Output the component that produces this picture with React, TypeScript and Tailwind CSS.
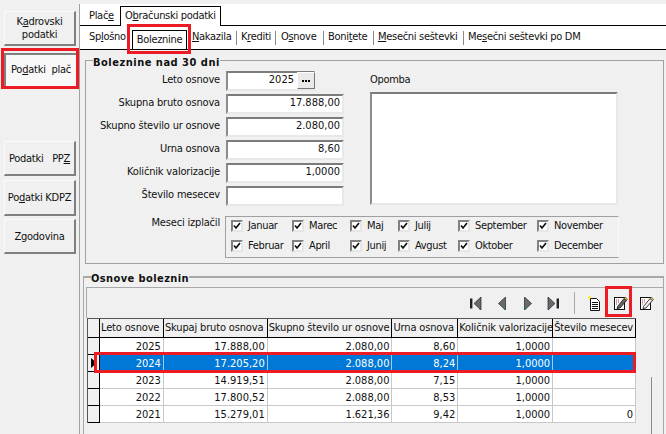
import React from "react";

const U = ({ children }: { children: React.ReactNode }) => <span className="underline underline-offset-1">{children}</span>;

function SideBtn({ children, className = "" }: { children: React.ReactNode; className?: string }) {
  return (
    <div className={`w-[72px] ml-[4px] flex flex-col items-center justify-center leading-[13px] text-center whitespace-nowrap border-t border-l border-t-[#fafafa] border-l-[#fafafa] border-b-2 border-r-2 border-b-[#7f7f7f] border-r-[#7f7f7f] bg-[#f0f0f0] ${className}`}>
      {children}
    </div>
  );
}

function Field({ label, value, extra }: { label: string; value?: string; extra?: React.ReactNode }) {
  return (
    <div className="flex items-center h-[23px]">
      <div className="w-[134px] text-right whitespace-nowrap tracking-[-0.18px]">{label}</div>
      <div className={`ml-[6px] ${extra ? "w-[89px] pr-0" : "w-[118px] pr-[2px]"} h-[20px] flex items-center justify-end bg-white border-2 border-t-[#7c7c7c] border-l-[#8c8c8c] border-b-[#e8e8e8] border-r-[#e8e8e8]`}>
        <span>{value}</span>
        {extra && <div className="ml-[3px] -mr-[2px]">{extra}</div>}
      </div>
    </div>
  );
}

function Check({ label, w }: { label: string; w: string }) {
  return (
    <div className={`flex items-center h-[12px] leading-[12px] ${w}`}>
      <div className="w-[12px] h-[12px] shrink-0 bg-white border-2 border-t-[#808080] border-l-[#808080] border-b-[#e6e6e6] border-r-[#e6e6e6] flex items-center justify-center">
        <svg width="8" height="8" viewBox="0 0 8 8"><path d="M1 3.5 L3 6 L7 1" fill="none" stroke="#111" strokeWidth="1.7" /></svg>
      </div>
      <span className="ml-[5px] whitespace-nowrap tracking-[-0.35px]">{label}</span>
    </div>
  );
}

function Dots() {
  return (
    <div className="w-[18px] h-[17px] bg-[#eaeaea] border border-t-white border-l-white border-b-[#777] border-r-[#777] flex items-center justify-center gap-[1px]">
      <i className="w-[2px] h-[2px] bg-black" /><i className="w-[2px] h-[2px] bg-black" /><i className="w-[2px] h-[2px] bg-black" />
    </div>
  );
}

const cols = ["w-[64px]", "w-[104px]", "w-[125px]", "w-[66px]", "w-[95px]", "w-[83px]"];
const heads = ["Leto osnove", "Skupaj bruto osnova", "Skupno število ur osnove", "Urna osnova", "Količnik valorizacije", "Število mesecev"];
const rows = [
  ["2025", "17.888,00", "2.080,00", "8,60", "1,0000", ""],
  ["2024", "17.205,20", "2.088,00", "8,24", "1,0000", ""],
  ["2023", "14.919,51", "2.088,00", "7,15", "1,0000", ""],
  ["2022", "17.800,52", "2.088,00", "8,53", "1,0000", ""],
  ["2021", "15.279,01", "1.621,36", "9,42", "1,0000", "0"],
];

function Nav() {
  const c = "#6a6a6a";
  return (
    <div className="flex items-center h-[30px] justify-end pr-[9px]">
      <svg width="12" height="13" viewBox="0 0 12 13" className="mr-[16px]"><rect x="0" y="1.5" width="2" height="10" fill="#222" /><rect x="2" y="1.5" width="1" height="10" fill="#999" /><path d="M11 0 L4 6.5 L11 13Z" fill={c} stroke="#222" strokeWidth="0.7" /><path d="M9 11.5 L11 13" stroke="#7a1fa2" /></svg>
      <svg width="8" height="13" viewBox="0 0 8 13" className="mr-[18px]"><path d="M7.5 0 L0.5 6.5 L7.5 13Z" fill={c} stroke="#222" strokeWidth="0.7" /><path d="M5.5 11.5 L7.5 13" stroke="#1c8a8a" /></svg>
      <svg width="8" height="13" viewBox="0 0 8 13" className="mr-[15px]"><path d="M0.5 0 L7.5 6.5 L0.5 13Z" fill={c} stroke="#222" strokeWidth="0.7" /><path d="M0.5 13 L3 10.8" stroke="#1c8a8a" /></svg>
      <svg width="12" height="13" viewBox="0 0 12 13" className="mr-[15px]"><rect x="10" y="1.5" width="2" height="10" fill="#222" /><rect x="9" y="1.5" width="1" height="10" fill="#999" /><path d="M1 0 L8 6.5 L1 13Z" fill={c} stroke="#222" strokeWidth="0.7" /><path d="M1 13 L3.5 10.8" stroke="#7a1fa2" /></svg>
      <div className="w-[1px] h-[22px] bg-[#a8a8a8] mr-[12px]" />
      <svg width="14" height="16" viewBox="0 0 14 16" className="mr-[13px]">
        <path d="M3.5 3.5 H9.5 L12.5 6.5 V15.5 H3.5Z" fill="#fff" stroke="#111" />
        <path d="M5 7.5H11M5 9.5H11M5 11.5H11M5 13.5H11" stroke="#111" />
        <path d="M2.5 0 L3.3 1.7 L5 2.5 L3.3 3.3 L2.5 5 L1.7 3.3 L0 2.5 L1.7 1.7Z" fill="#ffee22" />
      </svg>
      <svg width="14" height="14" viewBox="0 0 14 14" className="mr-[12px]">
        <rect x="0.5" y="1.5" width="10" height="12" fill="#fff" stroke="#111" />
        <path d="M2 4H6M2 6H5M2 8H4" stroke="#b33" strokeDasharray="1 1" />
        <path d="M3.5 10.5 L10 2.5 L12.5 4.5 L6 12 L3 12.5Z" fill="#666" stroke="#111" strokeWidth="0.8" />
        <path d="M11 1 L13.5 3 L12.5 4.5 L10 2.5Z" fill="#e8c840" stroke="#111" strokeWidth="0.5" />
      </svg>
      <svg width="14" height="14" viewBox="0 0 14 14">
        <rect x="0.5" y="1.5" width="10" height="12" fill="#fff" stroke="#111" />
        <path d="M2 4H6M2 6H5M2 8H4" stroke="#c44" strokeDasharray="1 1" />
        <path d="M3.5 10.5 L10 2.5 L12.5 4.5 L6 12 L3 12.5Z" fill="#eee" stroke="#111" strokeWidth="0.8" />
        <path d="M11 1 L13.5 3 L12.5 4.5 L10 2.5Z" fill="#f0d840" stroke="#111" strokeWidth="0.5" />
      </svg>
    </div>
  );
}

const Sep = () => <div className="w-[1px] h-[14px] bg-[#8a8a8a] mr-[4px] shrink-0" />;

export default function App() {
  return (
    <div className="relative w-[666px] h-[434px] overflow-hidden bg-[#f0f0f0] text-[11px] text-[#111] font-['DejaVu_Sans_Condensed','DejaVu_Sans',sans-serif] [font-stretch:condensed] pt-[4px] flex">
      <div className="w-[80px] shrink-0 border-r border-[#a0a0a0] h-full tracking-[-0.25px]">
        <SideBtn className="h-[35px] mt-[7px]"><span>K<U>a</U>drovski</span><span>podatki</span></SideBtn>
        <div className="ml-[4px] w-[72px] h-[33px] mt-[7px] flex items-center justify-center whitespace-pre bg-[#f8f8f8] border-t-2 border-l-2 border-t-[#808080] border-l-[#808080]">Po<U>d</U>atki  plač</div>
        <SideBtn className="h-[35px] mt-[55px]"><span className="whitespace-pre">Podatki   PP<U>Z</U></span></SideBtn>
        <SideBtn className="h-[36px] mt-[4px]"><span>Po<U>d</U>atki KDPZ</span></SideBtn>
        <SideBtn className="h-[35px] mt-[3px]">Zgodovina</SideBtn>
      </div>

      <div className="flex-1 flex flex-col min-w-0">
        <div className="bg-white h-[46px] shrink-0 whitespace-nowrap tracking-[-0.3px]">
          <div className="h-[22px] flex items-end border-b border-black pl-[9px]">
            <div className="w-[31px] pb-[1px]">Plač<U>e</U></div>
            <div className="h-[20px] w-[101px] shrink-0 border border-b-0 border-black flex items-center pl-[4px] bg-white -mb-[1px]">O<U>b</U>računski podatki</div>
          </div>
          <div className="h-[24px] flex items-center border-b border-black pl-[9px]">
            <span className="w-[43px]">Sp<U>l</U>ošno</span>
            <div className="h-[19px] self-end w-[55px] border-l border-t border-r border-black flex items-center justify-center">Boleznine</div>
            <span className="ml-[5px] w-[44px]"><U>N</U>akazila</span><Sep />
            <span className="w-[34px]">K<U>r</U>editi</span><Sep />
            <span className="ml-[1px] w-[42px]">O<U>s</U>nove</span><Sep />
            <span className="w-[45px]">Boni<U>t</U>ete</span><Sep />
            <span className="w-[85px]"><U>M</U>esečni seštevki</span><Sep />
            <span>Me<U>s</U>ečni seštevki po DM</span>
          </div>
        </div>

        <div className="ml-[5px] mr-[2px] mt-[10px] h-[204px] border border-[#a0a0a0] relative">
          <div className="absolute -top-[5px] left-[7px] bg-[#f0f0f0] font-bold leading-[13px] tracking-[0.5px]">Boleznine nad 30 dni</div>
          <div className="flex pt-[8px]">
            <div>
              <Field label="Leto osnove" value="2025" extra={<Dots />} />
              <Field label="Skupna bruto osnova" value="17.888,00" />
              <Field label="Skupno število ur osnove" value="2.080,00" />
              <Field label="Urna osnova" value="8,60" />
              <Field label="Količnik valorizacije" value="1,0000" />
              <Field label="Število mesecev" />
            </div>
            <div className="ml-[26px]">
              <div className="h-[23px] flex items-center tracking-[-0.3px]">Opomba</div>
              <div className="w-[248px] h-[113px] bg-white border-2 border-t-[#7c7c7c] border-l-[#8c8c8c] border-b-[#e8e8e8] border-r-[#e8e8e8]" />
            </div>
          </div>
          <div className="flex mt-[9px]">
            <div className="w-[134px] text-right leading-[13px] whitespace-nowrap tracking-[-0.18px]">Meseci izplačil</div>
            <div className="ml-[5px] w-[394px] h-[42px] border border-t-[#a0a0a0] border-l-[#a0a0a0] border-b-[#a0a0a0] border-r-[#fafafa] pl-[5px] pb-[2px] flex flex-col justify-center gap-[8px]">
              <div className="flex">
                <Check w="w-[61px]" label="Januar" /><Check w="w-[58px]" label="Marec" /><Check w="w-[48px]" label="Maj" /><Check w="w-[60px]" label="Julij" /><Check w="w-[79px]" label="September" /><Check w="w-[80px]" label="November" />
              </div>
              <div className="flex">
                <Check w="w-[61px]" label="Februar" /><Check w="w-[58px]" label="April" /><Check w="w-[48px]" label="Junij" /><Check w="w-[60px]" label="Avgust" /><Check w="w-[79px]" label="Oktober" /><Check w="w-[80px]" label="December" />
              </div>
            </div>
          </div>
        </div>

        <div className="ml-[3px] mr-[2px] mt-[12px] flex-1 border-t-2 border-l border-r border-[#a8a8a8] relative">
          <div className="absolute -top-[6px] left-[7px] bg-[#f0f0f0] font-bold leading-[13px] tracking-[0.4px]">Osnove boleznin</div>
          <div className="ml-[2px] mt-[9px] h-[31px] border-t border-l border-[#a8a8a8]">
            <Nav />
          </div>
          <div className="ml-[3px] w-[549px] border-t border-l border-[#555] relative">
            <div className="flex h-[19px] border-b border-black tracking-[-0.15px]">
              <div className="w-[12px] border-r border-black bg-[#f0f0f0]" />
              {heads.map((h, i) => (
                <div key={h} className={`${cols[i]} bg-[#f0f0f0] border-r border-black pl-[1px] pt-[1px] flex items-center whitespace-nowrap overflow-hidden`}>{h}</div>
              ))}
            </div>
            {rows.map((r, ri) => (
              <div key={ri} className="flex h-[17px]">
                <div className="w-[12px] border-r border-black border-b bg-[#f0f0f0] flex items-center">
                  {ri === 1 && <div className="w-0 h-0 ml-[3px] border-y-[5px] border-y-transparent border-l-[6px] border-l-black" />}
                </div>
                {r.map((v, i) => (
                  <div key={i} className={`${cols[i]} ${ri === 1 ? "bg-[#0078d7] text-white border-[#a9c8e4]" : "bg-white border-[#c8c8c8]"} border-r border-b pr-[2px] pt-[2px] flex items-center justify-end`}>{v}</div>
                ))}
              </div>
            ))}
          </div>
        </div>
      </div>

      <div className="absolute left-[651px] top-[377px] h-[57px] w-[1px] bg-[#8a8a8a]" />
      <div className="absolute left-[1px] top-[48px] w-[78px] h-[41px] border-[3px] border-[#ed1c24]" />
      <div className="absolute left-[127px] top-[24px] w-[64px] h-[30px] border-[3px] border-[#ed1c24]" />
      <div className="absolute left-[94px] top-[352px] w-[542px] h-[21px] border-[3px] border-[#ed1c24]" />
      <div className="absolute left-[605px] top-[286px] w-[27px] h-[31px] border-[3px] border-[#ed1c24]" />
    </div>
  );
}
